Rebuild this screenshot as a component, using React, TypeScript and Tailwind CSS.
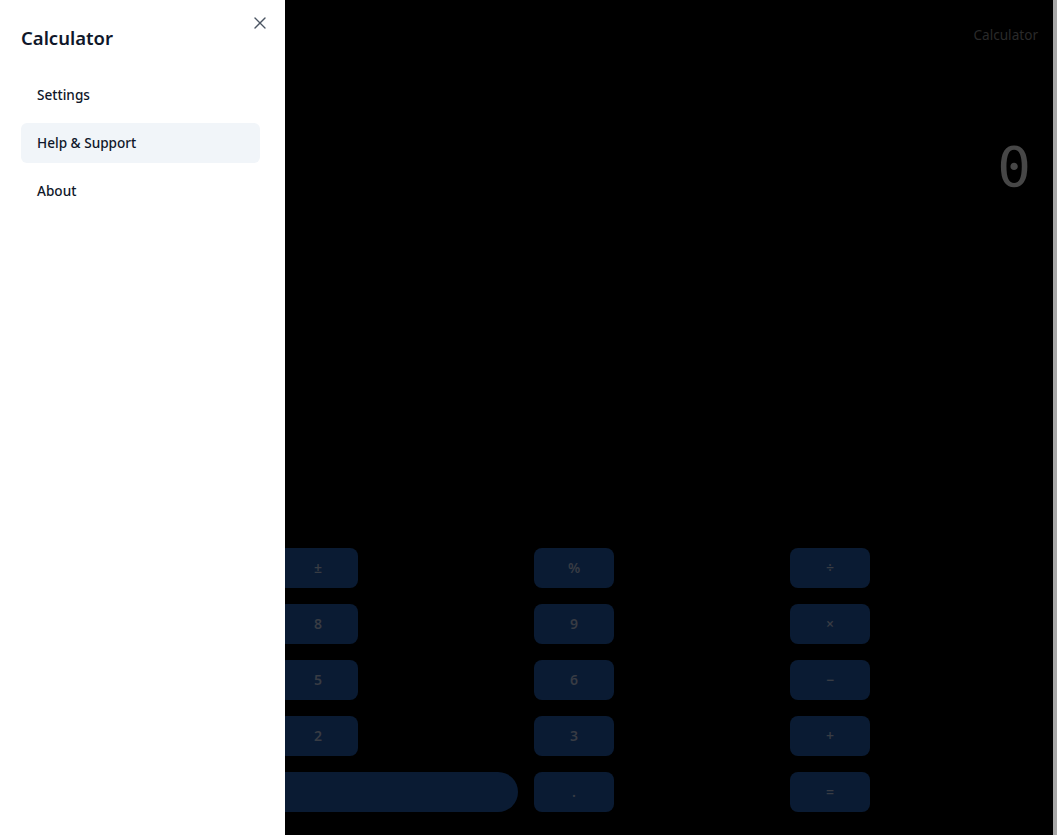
import React from "react";
import { X } from "lucide-react";

const rows: { label: string; span?: boolean }[][] = [
  [{ label: "C" }, { label: "±" }, { label: "%" }, { label: "÷" }],
  [{ label: "7" }, { label: "8" }, { label: "9" }, { label: "×" }],
  [{ label: "4" }, { label: "5" }, { label: "6" }, { label: "−" }],
  [{ label: "1" }, { label: "2" }, { label: "3" }, { label: "+" }],
  [{ label: "0", span: true }, { label: "." }, { label: "=" }],
];

export default function App() {
  const font = { fontFamily: '"Noto Sans", "Open Sans", sans-serif' };
  return (
    <div className="relative flex h-[835px] w-[1057px] overflow-hidden bg-black" style={font}>
      <div className="flex h-full w-[1053px] flex-col bg-black pl-[22px] pr-[15px]">
        <div className="flex justify-end pt-[25px]">
          <span className="text-[13.6px] leading-5 text-[#2a2a2a]">Calculator</span>
        </div>
        <div className="mt-[94px] flex justify-end pr-[7px]">
          <span
            className="text-[56px] leading-[56px] text-[#474747] slashed-zero"
            style={{ fontFamily: '"DejaVu Sans Mono", "Liberation Mono", monospace' }}
          >
            0
          </span>
        </div>
        <div className="mt-auto mb-[23px] grid w-[1008px] grid-cols-4 gap-4">
          {rows.flat().map((b, i) => (
            <button
              key={i}
              className={
                b.span
                  ? "col-span-2 flex h-10 items-center justify-center rounded-full bg-[#0a1b33] text-sm font-semibold text-[#383c44]"
                  : "flex h-10 w-20 items-center justify-center rounded-lg bg-[#0a1b33] text-sm font-semibold text-[#383c44]"
              }
            >
              {b.label}
            </button>
          ))}
        </div>
      </div>
      <div className="h-full w-[4px] bg-[#a8a8a8]" />

      <div className="absolute left-0 top-0 flex h-full w-[285px] flex-col bg-white pl-[21px] pr-[25px] pt-[26px]">
        <h2 className="text-[18.5px] font-semibold leading-6 text-[#0f172a]">Calculator</h2>
        <button className="absolute left-[250px] top-[13px] text-[#4b5563]">
          <X size={20} strokeWidth={1.6} />
        </button>
        <nav className="mt-[25px] flex flex-col gap-2">
          <div className="flex h-10 items-center rounded-md px-4 text-[13.6px] font-medium text-[#0f172a]">Settings</div>
          <div className="flex h-10 items-center rounded-md bg-[#f1f5f9] px-4 text-[13.6px] font-medium text-[#0f172a]">
            Help &amp; Support
          </div>
          <div className="flex h-10 items-center rounded-md px-4 text-[13.6px] font-medium text-[#0f172a]">About</div>
        </nav>
      </div>
    </div>
  );
}
